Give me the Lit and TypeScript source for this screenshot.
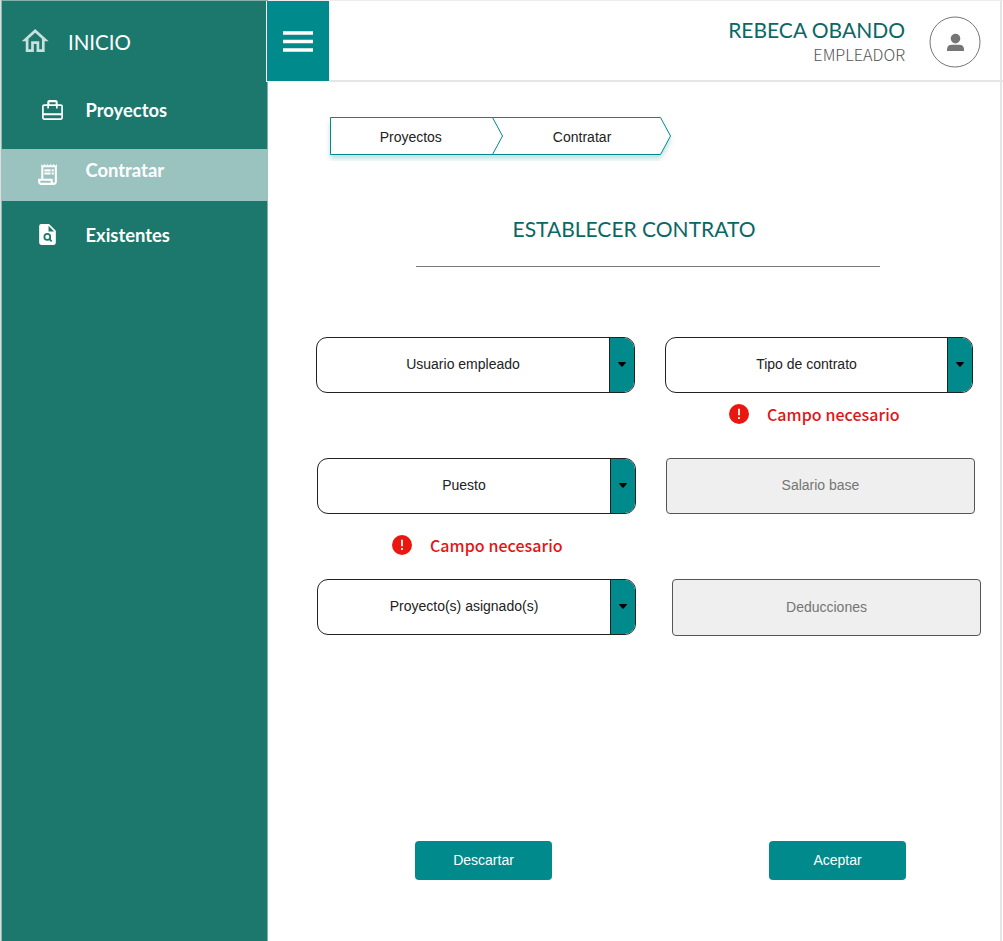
import { LitElement, html, svg, css } from "lit";
import { customElement, property } from "lit/decorators.js";

@customElement("select-field")
class SelectField extends LitElement {
  @property() label = "";
  static styles = css`
    :host { display: block; height: 56px; box-sizing: border-box; }
    .box { display: flex; height: 100%; box-sizing: border-box; border: 1px solid #222; border-radius: 11px; overflow: hidden; background: #fff; }
    .label { flex: 1; display: flex; align-items: center; justify-content: center; font: 14px/18px "Liberation Sans", Arial, sans-serif; color: #222; padding-bottom: 2px; }
    .arrow { width: 24px; border-left: 1px solid #222; background: #008a8c; display: flex; align-items: center; justify-content: center; padding-bottom: 1px; }
    svg { display: block; }
  `;
  render() {
    return html`<div class="box">
      <span class="label">${this.label}</span>
      <span class="arrow"><svg width="8" height="5" viewBox="0 0 8 5"><path d="M.4 0h7.2q.6.4.1 1L4.6 4.5q-.6.5-1.2 0L.3 1Q-.2.4.4 0z" fill="#000"/></svg></span>
    </div>`;
  }
}

@customElement("field-error")
class FieldError extends LitElement {
  static styles = css`
    :host { display: flex; align-items: center; gap: 17.5px; height: 24px; font: 500 16px/24px "Noto Sans CJK SC", sans-serif; color: #e31414; white-space: nowrap; }
    svg { display: block; }
    .text { letter-spacing: 0.06px; }
  `;
  render() {
    return html`<svg width="20" height="20" viewBox="0 0 20 20"><circle cx="10" cy="10" r="10" fill="#ea1710"/><path d="M9 4.8h2v6.4H9zM9 13h2v2.1H9z" fill="#ffe3e0"/></svg>
      <span class="text">Campo necesario</span>`;
  }
}

const icons = {
  home: svg`<path d="M12 5.69l5 4.5V18h-2v-6H9v6H7v-7.81l5-4.5M12 3L2 12h3v8h6v-6h2v6h6v-8h3L12 3z"/>`,
  travel: svg`<path d="M20 6h-3V4c0-1.11-.89-2-2-2H9c-1.11 0-2 .89-2 2v2H4c-1.11 0-2 .89-2 2v11c0 1.11.89 2 2 2h16c1.11 0 2-.89 2-2V8c0-1.11-.89-2-2-2zM9 4h6v2H9V4zm11.400 15.400H3.600v-2.800h16.800v2.800zm0-4.800H3.600V7.600H7v2.400h1.600V7.600h6.800V10H17V7.600h3.400v7z"/>`,
  receipt: svg`<path d="M19.5 3.5L18 2l-1.5 1.5L15 2l-1.5 1.5L12 2l-1.5 1.5L9 2 7.5 3.5 6 2v14H3v3c0 1.66 1.34 3 3 3h12c1.66 0 3-1.34 3-3V2l-1.500 1.500zM15 20H6c-.55 0-1-.45-1-1v-1h10v2zm4-1c0 .55-.45 1-1 1s-1-.45-1-1v-3H8V5h11v14zM9 7h6v2H9zM16 7h2v2h-2zM9 10h6v2H9zM16 10h2v2h-2z"/>`,
  search: svg`<path fill-rule="evenodd" d="M6 2h7.500l6.500 6.500V20a2 2 0 0 1-2 2H6a2 2 0 0 1-2-2V4a2 2 0 0 1 2-2zm7 1.700V9h5.300z"/><circle cx="11.800" cy="14.300" r="2.800" fill="none" stroke="#1c786c" stroke-width="1.700"/><path d="M13.700 16.200l2.300 2.300" stroke="#1c786c" stroke-width="1.700"/>`,
};

@customElement("app-root")
class AppRoot extends LitElement {
  static styles = css`
    :host { display: block; width: 1003px; height: 941px; background: #fff; font-family: "Liberation Sans", Arial, sans-serif; }
    .page { display: flex; height: 941px; box-sizing: border-box; border-left: 1px solid #dedede; overflow: hidden; }
    svg { display: block; flex: none; }
    .side { width: 267px; flex: none; box-sizing: border-box; border: 1px solid #83b2ab; border-bottom: 0; border-left-color: #8eb9b2; background: #1c786c; color: #fff; font-family: Lato, sans-serif; }
    .home { display: flex; align-items: center; height: 80px; padding-left: 17px; box-sizing: border-box; font-size: 20.5px; }
    .home svg { fill: #c9e0dc; margin-top: 1px; }
    .home span { margin: 2px 0 0 16.500px; }
    .item { display: flex; box-sizing: border-box; height: 52px; font-weight: 700; font-size: 18.4px; line-height: 24px; margin-right: -1px; margin-left: -1px; padding-left: 1px; }
    .item svg { fill: #fff; }
    .glyph { width: 83.5px; box-sizing: border-box; }
    .item.projects { height: 68px; padding-top: 17px; }
    .projects .glyph { padding-left: 38px; }
    .item.active { background: #9ac3bf; padding-top: 9px; }
    .active .glyph { padding: 4px 0 0 33px; }
    .item.existing { padding-top: 22px; }
    .existing .glyph { padding-left: 33px; }
    .existing svg { margin-top: -1px; }
    .content { width: 734px; flex: none; border-right: 2px solid #e5e5e5; box-sizing: border-box; }
    .top { display: flex; height: 82px; box-sizing: border-box; border-top: 1px solid #ededed; border-bottom: 2px solid #e5e5e5; margin-right: -3px; }
    .burger { width: 62px; height: 80px; margin-left: -2px; background: #008a8c; border-left: 1px solid #fff; border-bottom: 1px solid #fff; display: flex; align-items: center; justify-content: center; flex: none; position: relative; }
    .user { margin-left: auto; text-align: right; padding: 16px 0 0; white-space: nowrap; }
    .name { font: 21px/25px Lato, sans-serif; color: #0b6765; }
    .role { font: 300 16.2px/24px "Noto Sans CJK SC", sans-serif; color: #555; }
    .avatar { margin: 15px 22px 0 24px; }
    .crumbs { margin: 29px 0 0 56px; }
    .crumbs text { font: 14px "Liberation Sans", Arial, sans-serif; fill: #222; }
    h1 { margin: 55px 0 0; width: 732px; text-align: center; font: 21px/26px Lato, sans-serif; color: #0b6765; }
    .rule { width: 464px; height: 1px; background: #777; margin: 24px 0 0 148px; }
    .form { height: 574px; box-sizing: border-box; padding-top: 70px; }
    .row { display: flex; height: 121px; align-items: flex-start; }
    .cell.left { width: 319px; margin-left: 49px; }
    .one .left { margin-left: 48px; }
    .cell.right { width: 309px; margin-left: 30px; }
    .one .right { width: 308px; }
    .three .right { margin-left: 36px; }
    .one field-error { margin: 9px 0 0 64.400px; }
    .two field-error { margin: 19px 0 0 75.400px; }
    .input { height: 56px; box-sizing: border-box; border: 1px solid #555; border-radius: 4px; background: #efefef; color: #757575; font-size: 14px; line-height: 18px; display: flex; align-items: center; justify-content: center; padding-bottom: 2px; }
    .three .input { height: 57px; }
    .actions { display: flex; gap: 217px; padding: 141px 0 0 147px; }
    .btn { width: 137px; height: 39px; border: 0; padding: 0 0 1px; border-radius: 4px; background: #008a8c; color: #fff; font: 14px/18px "Liberation Sans", Arial, sans-serif; }
  `;

  private icon(shape: unknown, size: number) {
    return html`<svg width=${size} height=${size} viewBox="0 0 24 24">${shape}</svg>`;
  }

  render() {
    return html`<div class="page">
      <nav class="side">
        <div class="home">${this.icon(icons.home, 32.4)}<span>INICIO</span></div>
        <div class="item projects"><span class="glyph">${this.icon(icons.travel, 25)}</span><span>Proyectos</span></div>
        <div class="item active"><span class="glyph">${this.icon(icons.receipt, 25)}</span><span>Contratar</span></div>
        <div class="item existing"><span class="glyph">${this.icon(icons.search, 25)}</span><span>Existentes</span></div>
      </nav>
      <main class="content">
        <header class="top">
          <div class="burger"><svg width="30" height="21" viewBox="0 0 30 21"><path d="M0 .2h30v3.500H0zM0 8.700h30v3.500H0zM0 17.200h30v3.500H0z" fill="#fff"/></svg></div>
          <div class="user"><div class="name">REBECA OBANDO</div><div class="role">EMPLEADOR</div></div>
          <svg class="avatar" width="52" height="52" viewBox="0 0 52 52"><circle cx="26" cy="26" r="25" fill="#fff" stroke="#757575"/><circle cx="26.500" cy="22.600" r="4.800" fill="#757575"/><path d="M18 35v-1.500q0-4.800 4.800-4.800h7.400q4.800 0 4.800 4.800V35z" fill="#757575"/></svg>
        </header>
        <svg class="crumbs" width="360" height="50" viewBox="0 0 360 50">
          <defs><filter id="sh" x="-5%" y="-20%" width="110%" height="170%"><feDropShadow dx="0" dy="4" stdDeviation="2.500" flood-color="#008a8c" flood-opacity=".25"/></filter></defs>
          <path d="M6.500 6.500H336.500L346.500 25 336.500 43.500H6.500z" fill="#fff" stroke="#008a8c" filter="url(#sh)"/>
          <path d="M168.500 6.500L178.500 25 168.500 43.500" fill="none" stroke="#008a8c"/>
          <text x="55.800" y="31" textLength="62">Proyectos</text>
          <text x="228.800" y="31" textLength="58.500">Contratar</text>
        </svg>
        <h1>ESTABLECER CONTRATO</h1>
        <div class="rule"></div>
        <section class="form">
          <div class="row one">
            <div class="cell left"><select-field label="Usuario empleado"></select-field></div>
            <div class="cell right"><select-field label="Tipo de contrato"></select-field><field-error></field-error></div>
          </div>
          <div class="row two">
            <div class="cell left"><select-field label="Puesto"></select-field><field-error></field-error></div>
            <div class="cell right"><div class="input">Salario base</div></div>
          </div>
          <div class="row three">
            <div class="cell left"><select-field label="Proyecto(s) asignado(s)"></select-field></div>
            <div class="cell right"><div class="input">Deducciones</div></div>
          </div>
          <div class="actions"><button class="btn">Descartar</button><button class="btn">Aceptar</button></div>
        </section>
      </main>
    </div>`;
  }
}
